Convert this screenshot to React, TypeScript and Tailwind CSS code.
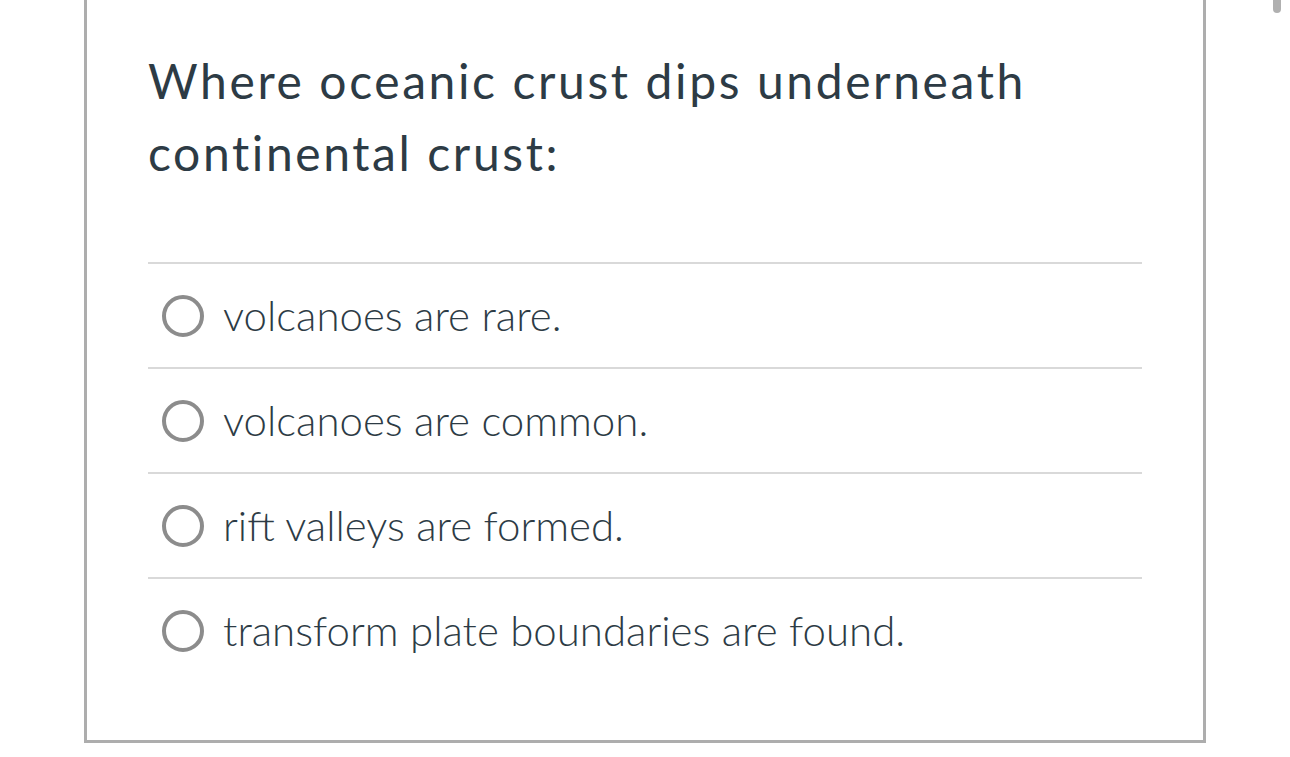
const options = [
  "volcanoes are rare.",
  "volcanoes are common.",
  "rift valleys are formed.",
  "transform plate boundaries are found.",
];

function Radio() {
  return (
    <span className="ml-[14px] mr-[19px] box-border h-[42px] w-[42px] shrink-0 rounded-full border-[4px] border-[#8c8c8c] bg-white" />
  );
}

export default function App() {
  return (
    <div className="relative h-[757px] w-full overflow-hidden bg-white font-['Lato','Liberation_Sans',sans-serif] text-[#2d3b45]">
      <div className="absolute right-[9px] top-0 h-[13px] w-[8px] rounded-b-full bg-[#b0b0b0]" />
      <div className="ml-[84px] box-border w-[1122px] border-x-[3px] border-b-[3px] border-[#adadad] px-[61px] pb-[58px] pt-[45px]">
        <h2 className="mb-[73px] text-[48px] font-normal leading-[72px] tracking-[2.6px]">
          Where oceanic crust dips underneath
          <br />
          continental crust:
        </h2>
        <ul>
          {options.map((o) => (
            <li
              key={o}
              className="flex items-center border-t-2 border-[#d9d9d9] py-[20px] text-[42px] font-light leading-[63px]"
            >
              <Radio />
              <span>{o}</span>
            </li>
          ))}
        </ul>
      </div>
    </div>
  );
}
